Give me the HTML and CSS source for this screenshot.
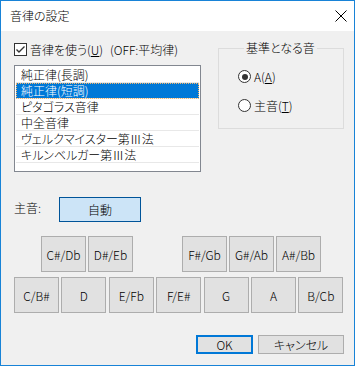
FILE: index.html
```html
<!DOCTYPE html>
<html lang="ja">

<head>
    <meta charset="UTF-8">
    <meta name="viewport" content="width=device-width, initial-scale=1.0">
    <title>音律の設定</title>
    <link rel="stylesheet" href="styles.css">
</head>

<body>
    <div class="window">
        <div class="titlebar">
            <span class="title">音律の設定</span>
            <svg class="close" width="12" height="12" viewBox="0 0 12 12">
                <path d="M0.5 0.5 L11.5 11.5 M11.5 0.5 L0.5 11.5" stroke="#000" stroke-width="1" fill="none" />
            </svg>
        </div>

        <div class="content">
            <div class="top">
                <div class="left">
                    <div class="check-row">
                        <span class="checkbox">
                            <svg width="11" height="11" viewBox="0 0 11 11">
                                <path d="M1.5 5.5 L4 8 L9.5 2.5" stroke="#333" stroke-width="1.4" fill="none" />
                            </svg>
                        </span>
                        <span class="check-label">音律を使う(<u>U</u>)</span>
                        <span class="note">(OFF:平均律)</span>
                    </div>
                    <ul class="list">
                        <li>純正律(長調)</li>
                        <li class="selected">純正律(短調)</li>
                        <li>ピタゴラス音律</li>
                        <li>中全音律</li>
                        <li>ヴェルクマイスター第Ⅲ法</li>
                        <li>キルンベルガー第Ⅲ法</li>
                    </ul>
                </div>

                <fieldset class="group">
                    <legend>基準となる音</legend>
                    <div class="radio-row"><span class="radio checked"></span>A(<u>A</u>)</div>
                    <div class="radio-row"><span class="radio"></span>主音(<u>T</u>)</div>
                </fieldset>
            </div>

            <div class="tonic-row">
                <span class="tonic-label">主音:</span>
                <button class="auto-btn">自動</button>
            </div>

            <div class="keys keys-sharp">
                <button class="key">C#/Db</button>
                <button class="key">D#/Eb</button>
                <span class="key-space"></span>
                <button class="key">F#/Gb</button>
                <button class="key">G#/Ab</button>
                <button class="key">A#/Bb</button>
            </div>
            <div class="keys keys-natural">
                <button class="key">C/B#</button>
                <button class="key">D</button>
                <button class="key">E/Fb</button>
                <button class="key">F/E#</button>
                <button class="key">G</button>
                <button class="key">A</button>
                <button class="key">B/Cb</button>
            </div>

            <div class="actions">
                <button class="btn btn-ok">OK</button>
                <button class="btn">キャンセル</button>
            </div>
        </div>
    </div>
</body>

</html>
```
FILE: styles.css
```css
body {
    margin: 0;
    padding: 0;
    background-color: #ffffff;
    font-family: "Noto Sans CJK JP", sans-serif;
    font-size: 12px;
    font-weight: 300;
    font-feature-settings: "palt";
    color: #000000;
}

.window {
    width: 355px;
    height: 366px;
    box-sizing: border-box;
    border: 1px solid #1883d7;
    background-color: #f0f0f0;
}

.titlebar {
    height: 30px;
    background-color: #ffffff;
    display: flex;
    align-items: center;
    justify-content: space-between;
    padding: 0 7px 0 9px;
}

.title {
    line-height: 16px;
}

.content {
    padding: 12px 10px 0 13px;
}

.top {
    display: flex;
    align-items: flex-start;
}

.left {
    width: 187px;
}

.check-row {
    display: flex;
    align-items: center;
    height: 13px;
    line-height: 16px;
}

.checkbox {
    width: 13px;
    height: 13px;
    box-sizing: border-box;
    border: 1px solid #333333;
    background-color: #ffffff;
    display: flex;
    align-items: center;
    justify-content: center;
}

.check-label {
    margin-left: 3px;
}

.note {
    margin-left: 7px;
}

.list {
    list-style: none;
    margin: 9px 0 0 0;
    padding: 1px;
    height: 107px;
    box-sizing: border-box;
    border: 1px solid #828790;
    background-color: #ffffff;
}

.list li {
    height: 16px;
    line-height: 15px;
    padding-left: 5px;
    border-bottom: 1px solid #e8e8e8;
    box-sizing: border-box;
}

.list li.selected {
    background-color: #0078d7;
    color: #ffffff;
    outline: 1px dotted #f5b56a;
    outline-offset: -1px;
}

.group {
    margin: -2px 0 0 17px;
    padding: 0 0 16px 19px;
    width: 126px;
    box-sizing: border-box;
    border: 1px solid #dcdcdc;
}

.group legend {
    margin-left: 6px;
    padding: 0 2px;
    line-height: 14px;
}

.radio-row {
    display: flex;
    align-items: center;
    height: 13px;
    line-height: 16px;
    margin-top: 15px;
}

.radio-row + .radio-row {
    margin-top: 16px;
}

.radio {
    width: 13px;
    height: 13px;
    box-sizing: border-box;
    border: 1px solid #333333;
    border-radius: 50%;
    background-color: #ffffff;
    margin-right: 3px;
    display: flex;
    align-items: center;
    justify-content: center;
}

.radio.checked::after {
    content: "";
    width: 6px;
    height: 6px;
    border-radius: 50%;
    background-color: #333333;
}

.tonic-row {
    display: flex;
    align-items: center;
    margin-top: 25px;
}

.tonic-label {
    width: 45px;
    padding-bottom: 4px;
}

button {
    font-family: inherit;
    font-size: 12px;
    font-weight: 300;
    font-feature-settings: "palt";
    color: #000000;
    padding: 0;
    margin: 0;
}

.auto-btn {
    width: 82px;
    height: 25px;
    background-color: #cce4f7;
    border: 1px solid #005499;
}

.keys {
    display: flex;
    gap: 2px;
}

.keys-sharp {
    margin-top: 14px;
    padding-left: 27px;
}

.keys-natural {
    margin-top: 5px;
    gap: 2.4px;
}

.key,
.key-space {
    width: 45px;
    height: 36px;
}

.key {
    background-color: #e1e1e1;
    border: 1px solid #adadad;
}

.actions {
    display: flex;
    justify-content: flex-end;
    gap: 5px;
    margin-top: 22px;
}

.btn {
    height: 19px;
    width: 86px;
    line-height: 15px;
    background-color: #e1e1e1;
    border: 1px solid #adadad;
}

.btn-ok {
    width: 57px;
    border: 2px solid #0078d7;
}
```
